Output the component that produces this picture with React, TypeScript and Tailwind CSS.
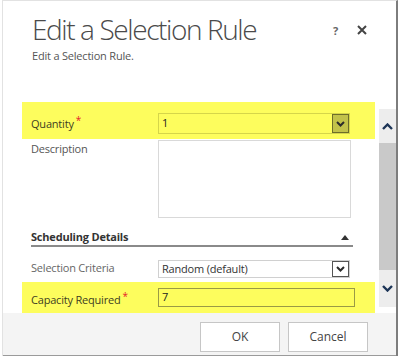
import React from "react";

const font = { fontFamily: '"Open Sans", "Noto Sans", sans-serif' };

function Chevron({ className = "" }: { className?: string }) {
  return (
    <svg width="9" height="6" viewBox="0 0 9 6" className={className}>
      <polyline points="1,1 4.5,4.5 8,1" fill="none" stroke="#2b2b2b" strokeWidth="2" />
    </svg>
  );
}

function Req() {
  return <span className="text-[#e5202a] text-[10px] relative -top-[4px] ml-[2px]">*</span>;
}

export default function App() {
  return (
    <div className="w-[400px] h-[358px] bg-white flex" style={font}>
      <div className="ml-[2px] mr-[2px] w-[396px] h-[356px] border-l border-t border-[#e2e2e2] border-r-2 border-r-[#7d7d7d] flex flex-col">
        {/* header */}
        <div className="h-[101px] relative pl-[29px] pt-[10px]">
          <h1 className="text-[28px] font-light text-[#4a4a4a] leading-[36px] tracking-[-1.4px]">Edit a Selection Rule</h1>
          <p className="text-[11px] text-[#555] leading-[14px] mt-[2px] tracking-[-0.2px]">Edit a Selection Rule.</p>
          <span className="absolute left-[330px] top-[22px] text-[11px] font-bold text-[#666]">?</span>
          <svg className="absolute left-[354px] top-[24px]" width="10" height="10" viewBox="0 0 10 10">
            <path d="M1 1 L9 9 M9 1 L1 9" stroke="#444" strokeWidth="2" />
          </svg>
        </div>

        {/* body */}
        <div className="h-[211px] flex tracking-[-0.2px]">
          <div className="ml-[19px] w-[353px] flex flex-col">
            {/* Quantity */}
            <div className="h-[37px] bg-[#fdfd5d] flex items-start">
              <div className="w-[136px] pl-[9px] pt-[15px] text-[11px] text-[#3d3d22] leading-[14px]">
                Quantity<Req />
              </div>
              <div className="mt-[11px] w-[192px] h-[21px] border border-[#d5d54a] flex items-center justify-between pl-[3px]">
                <span className="text-[11px] text-[#222]">1</span>
                <div className="w-[17px] h-[19px] bg-[#c2c24a] border border-[#6d6d2a] flex items-center justify-center">
                  <Chevron />
                </div>
              </div>
            </div>
            {/* Description */}
            <div className="h-[83px] flex items-start">
              <div className="w-[136px] pl-[9px] pt-[3px] text-[11px] text-[#555] leading-[14px]">Description</div>
              <div className="mt-[1px] w-[193px] h-[78px] border border-[#d9d9d9] bg-white"></div>
            </div>
            {/* Scheduling header */}
            <div className="h-[34px] pl-[9px] pr-[22px] pt-[8px]">
              <div className="h-[17px] border-b-2 border-[#8a8a8a] flex items-start justify-between">
                <span className="text-[11px] font-bold text-[#333] leading-[14px]">Scheduling Details</span>
                <svg className="mt-[5px] mr-[4px]" width="8" height="5" viewBox="0 0 8 5">
                  <polygon points="0,5 4,0 8,5" fill="#333" />
                </svg>
              </div>
            </div>
            {/* Selection Criteria */}
            <div className="h-[26px] flex items-start">
              <div className="w-[136px] pl-[9px] pt-[5px] text-[11px] text-[#666] leading-[14px]">Selection Criteria</div>
              <div className="mt-[4px] w-[192px] h-[18px] border border-[#d0d0d0] flex items-center justify-between pl-[3px]">
                <span className="text-[11px] text-[#333] leading-[14px]">Random (default)</span>
                <div className="w-[17px] h-[16px] bg-white border border-[#555] flex items-center justify-center">
                  <Chevron />
                </div>
              </div>
            </div>
            {/* Capacity */}
            <div className="h-[31px] bg-[#fdfd5d] flex items-start">
              <div className="w-[136px] pl-[9px] pt-[11px] text-[11px] text-[#3d3d22] leading-[14px]">
                Capacity Required<Req />
              </div>
              <div className="mt-[6px] w-[197px] h-[19px] border border-[#9a9a45] flex items-center pl-[3px]">
                <span className="text-[11px] text-[#222]">7</span>
              </div>
            </div>
          </div>

          {/* scrollbar */}
          <div className="ml-[4px] mt-[7px] w-[17px] h-[198px] bg-[#ededed] flex flex-col items-center">
            <div className="h-[34px] flex items-center justify-center">
              <svg width="11" height="7" viewBox="0 0 11 7">
                <polyline points="1,6 5.5,1.5 10,6" fill="none" stroke="#1d3557" strokeWidth="2.4" />
              </svg>
            </div>
            <div className="w-full h-[127px] bg-[#c9c9c9]"></div>
            <div className="h-[37px] flex items-center justify-center">
              <svg width="11" height="7" viewBox="0 0 11 7">
                <polyline points="1,1 5.5,5.5 10,1" fill="none" stroke="#1d3557" strokeWidth="2.4" />
              </svg>
            </div>
          </div>
        </div>

        {/* footer */}
        <div className="flex-1 bg-[#f4f4f4] border-b border-[#9a9a9a] flex justify-end items-start pt-[9px] pr-[28px] gap-[8px]">
          <button className="w-[80px] h-[30px] bg-white border border-[#c6c6c6] text-[12px] text-[#444]">OK</button>
          <button className="w-[80px] h-[30px] bg-white border border-[#c6c6c6] text-[12px] text-[#444]">Cancel</button>
        </div>
      </div>
    </div>
  );
}
